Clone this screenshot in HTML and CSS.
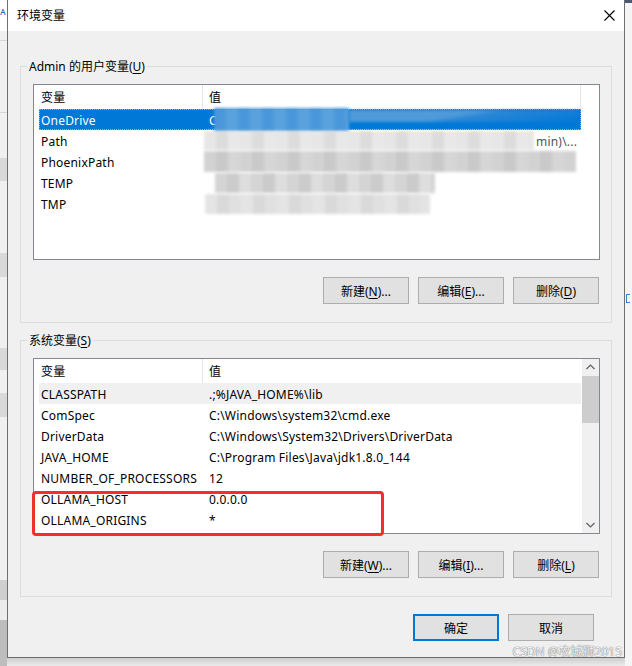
FILE: index.html
```html
<!DOCTYPE html>
<html lang="zh-CN">
<head>
<meta charset="utf-8">
<title>环境变量</title>
<link rel="stylesheet" href="styles.css">
</head>
<body>
<div class="screen">
  <div class="bg-left"><span class="bg-glyph">ᴀ</span></div>
  <div class="dialog-col">
    <div class="dialog">
      <div class="titlebar">
        <span class="title">环境变量</span>
        <svg class="close" width="11" height="11" viewBox="0 0 11 11"><path d="M0.5 0.5 L10.5 10.5 M10.5 0.5 L0.5 10.5" stroke="#000" stroke-width="1.1" fill="none"/></svg>
      </div>
      <div class="content">
        <div class="group">
          <div class="legend">Admin 的用户变量(<u>U</u>)</div>
          <div class="listbox">
            <div class="list">
              <div class="lhead"><div class="hcell1">变量</div><div class="hcell2">值</div></div>
              <div class="row selected"><div class="c1">OneDrive</div><div class="c2"><span>C</span><span class="mos blue1"></span><span class="mos blue2"></span></div></div>
              <div class="row"><div class="c1">Path</div><div class="c2"><span class="mos g-path"></span><span class="faint">min)\...</span></div></div>
              <div class="row"><div class="c1">PhoenixPath</div><div class="c2"><span class="mos g-phx"></span></div></div>
              <div class="row"><div class="c1">TEMP</div><div class="c2"><span class="mos g-temp"></span></div></div>
              <div class="row"><div class="c1">TMP</div><div class="c2"><span class="mos g-tmp"></span></div></div>
            </div>
          </div>
          <div class="btnrow">
            <button class="btn">新建(<u>N</u>)...</button>
            <button class="btn">编辑(<u>E</u>)...</button>
            <button class="btn">删除(<u>D</u>)</button>
          </div>
        </div>
        <div class="group g2">
          <div class="legend">系统变量(<u>S</u>)</div>
          <div class="listbox sys">
            <div class="list">
              <div class="lhead"><div class="hcell1">变量</div><div class="hcell2 narrow">值</div></div>
              <div class="row inactive"><div class="c1">CLASSPATH</div><div class="c2">.;%JAVA_HOME%\lib</div></div>
              <div class="row"><div class="c1">ComSpec</div><div class="c2">C:\Windows\system32\cmd.exe</div></div>
              <div class="row"><div class="c1">DriverData</div><div class="c2">C:\Windows\System32\Drivers\DriverData</div></div>
              <div class="row"><div class="c1">JAVA_HOME</div><div class="c2">C:\Program Files\Java\jdk1.8.0_144</div></div>
              <div class="row"><div class="c1">NUMBER_OF_PROCESSORS</div><div class="c2">12</div></div>
              <div class="row"><div class="c1">OLLAMA_HOST</div><div class="c2">0.0.0.0</div></div>
              <div class="row"><div class="c1">OLLAMA_ORIGINS</div><div class="c2">*</div></div>
            </div>
            <div class="vscroll">
              <div class="arrow"><svg width="17" height="17" viewBox="0 0 17 17"><path d="M4.5 10 L8.5 6 L12.5 10" stroke="#606060" stroke-width="1.2" fill="none"/></svg></div>
              <div class="thumb"></div>
              <div class="track"></div>
              <div class="arrow"><svg width="17" height="17" viewBox="0 0 17 17"><path d="M4.5 7 L8.5 11 L12.5 7" stroke="#606060" stroke-width="1.2" fill="none"/></svg></div>
            </div>
            <div class="highlight"></div>
          </div>
          <div class="btnrow">
            <button class="btn">新建(<u>W</u>)...</button>
            <button class="btn">编辑(<u>I</u>)...</button>
            <button class="btn">删除(<u>L</u>)</button>
          </div>
        </div>
        <div class="footer">
          <button class="btn default">确定</button>
          <button class="btn">取消</button>
        </div>
      </div>
    </div>
    <div class="shadow"></div>
  </div>
  <div class="bg-right"><span class="bg-mark"></span></div>
</div>
<div class="watermark">CSDN @攻城狮2015</div>
</body>
</html>
```
FILE: styles.css
```css
* { box-sizing: border-box; }
html, body { margin: 0; padding: 0; }
body {
  width: 632px;
  height: 666px;
  overflow: hidden;
  position: relative;
  background: #e8e8e8;
  font-family: "Noto Sans", "Noto Sans CJK SC", sans-serif;
  font-size: 12px;
  color: #000;
}
u { text-decoration: underline; text-underline-offset: 2px; }

.screen { display: flex; height: 666px; }

.bg-left {
  width: 7px;
  flex: none;
  position: relative;
  overflow: hidden;
  background: linear-gradient(to bottom,
    #ffffff 0 31px, #f0f0f0 31px 40px, #d5d5d5 40px 41px, #f0f0f0 41px 112px,
    #d5d5d5 112px 113px, #f0f0f0 113px 158px, #d9d9d9 158px 181px,
    #f0f0f0 181px 253px, #d9d9d9 253px 277px, #f0f0f0 277px 348px,
    #d9d9d9 348px 370px, #f0f0f0 370px 393px, #d9d9d9 393px 417px,
    #f0f0f0 417px 580px, #cfcfcf 580px 600px, #ececec 600px 620px,
    #bdbdbd 620px 666px);
}
.bg-glyph { position: absolute; left: 0; top: 5px; color: #2b6cc4; font-size: 11px; line-height: 12px; }

.bg-right {
  width: 7px;
  flex: none;
  position: relative;
  overflow: hidden;
  background: linear-gradient(to bottom, #4b5a70 0 3px, #f5f5f5 3px 100%);
}
.bg-mark {
  position: absolute;
  left: 1px;
  top: 294px;
  width: 4px;
  height: 9px;
  border: 1px solid #3b7fd0;
  border-right: none;
}

.dialog-col { width: 618px; flex: none; display: flex; flex-direction: column; }
.dialog {
  height: 658px;
  flex: none;
  border: 1px solid #6e6e6e;
  border-top: none;
  background: #f0f0f0;
  display: flex;
  flex-direction: column;
}
.shadow { flex: 1; background: linear-gradient(to bottom, #cdcdcd, #ececec); }

.titlebar {
  height: 31px;
  flex: none;
  background: #fff;
  display: flex;
  align-items: center;
  justify-content: space-between;
  padding: 0 9px 1px 9px;
}
.title { line-height: 16px; padding-top: 2px; }
.close { display: block; }

.content {
  flex: 1;
  padding: 35px 12px 0 12px;
  display: flex;
  flex-direction: column;
}

.group {
  border: 1px solid #dcdcdc;
  display: flex;
  flex-direction: column;
  padding: 0 11px 18px 12px;
}
.g2 { margin-top: 17px; }
.legend {
  align-self: flex-start;
  height: 16px;
  line-height: 15px;
  margin: -9px 0 0 -6px;
  padding: 1px 2px 0 2px;
  background: #f0f0f0;
}

.listbox {
  position: relative;
  height: 176px;
  margin-top: 10px;
  border: 1px solid #828790;
  background: #fff;
  display: flex;
  letter-spacing: 0.2px;
}
.list { flex: 1; display: flex; flex-direction: column; overflow: hidden; }
.lhead { height: 24px; flex: none; display: flex; }
.hcell1 {
  width: 169px;
  flex: none;
  border-right: 1px solid #e5e5e5;
  padding: 1px 0 0 7px;
  line-height: 23px;
}
.hcell2 {
  width: 378px;
  flex: none;
  border-right: 1px solid #e5e5e5;
  padding: 1px 0 0 6px;
  line-height: 23px;
}
.hcell2.narrow { border-right: none; }

.row {
  height: 21px;
  flex: none;
  width: 542px;
  margin-left: 5px;
  padding-top: 2px;
  display: flex;
  align-items: center;
  white-space: nowrap;
}
.c1 { width: 170px; flex: none; padding-left: 2px; }
.c2 { flex: 1; display: flex; align-items: center; }
.row.selected {
  background: #0078d7;
  color: #fff;
  outline: 1px dotted #f39c34;
  outline-offset: -1px;
}
.row.inactive { background: #f0f0f0; }

.mos { display: block; flex: none; filter: blur(1.5px); }
.blue1 {
  width: 135px;
  height: 24px;
  margin-left: -3px;
  margin-top: -2px;
  background: repeating-linear-gradient(90deg, #4a98db 0 12px, #5aa2de 12px 24px);
}
.blue2 {
  width: 230px;
  height: 12px;
  margin-top: -10px;
  background: linear-gradient(170deg, #4f9ad9 0 45%, #2a86d6 55%, #0078d7 100%);
}
.g-path {
  width: 330px;
  height: 19px;
  margin-left: -5px;
  margin-top: -2px;
  background: repeating-linear-gradient(90deg, #e6e6e6 0 12px, #dcdcdc 12px 24px, #e9e8e8 24px 36px);
}
.faint { color: #555; margin-left: 2px; }
.g-phx {
  width: 372px;
  height: 21px;
  margin-left: -5px;
  margin-top: -2px;
  background: repeating-linear-gradient(90deg, #d2d2d2 0 12px, #c9c9c9 12px 24px, #d6d6d6 24px 36px);
}
.g-temp {
  width: 220px;
  height: 20px;
  margin-left: 6px;
  margin-top: -2px;
  background: repeating-linear-gradient(90deg, #d4d4d4 0 12px, #cbcbcb 12px 24px, #dddddd 24px 36px);
}
.g-tmp {
  width: 225px;
  height: 20px;
  margin-left: -4px;
  margin-top: -2px;
  background: repeating-linear-gradient(90deg, #e4e4e4 0 12px, #d9d9d9 12px 24px, #e0e0e0 24px 36px);
}

.vscroll {
  width: 17px;
  flex: none;
  background: #f0f0f0;
  display: flex;
  flex-direction: column;
}
.arrow { height: 17px; flex: none; }
.arrow svg { display: block; }
.thumb { height: 47px; flex: none; background: #cdcdcd; }
.track { flex: 1; }

.highlight {
  position: absolute;
  left: -2px;
  top: 132px;
  width: 352px;
  height: 45px;
  border: 3px solid #f0302a;
  border-radius: 4px;
}

.btnrow {
  display: flex;
  justify-content: flex-end;
  gap: 9px;
  margin-top: 17px;
  padding-right: 1px;
}
.btn {
  width: 86px;
  height: 27px;
  padding: 1px 0 0 0;
  margin: 0;
  background: #e1e1e1;
  border: 1px solid #adadad;
  font-family: inherit;
  font-size: 12px;
  color: #000;
  display: flex;
  align-items: center;
  justify-content: center;
}
.btn.default { border: 2px solid #0078d7; }

.footer {
  display: flex;
  justify-content: flex-end;
  gap: 9px;
  margin-top: 17px;
  padding-right: 18px;
}

.watermark {
  position: absolute;
  right: 10px;
  top: 644px;
  font-size: 12px;
  line-height: 16px;
  color: #f4f4f4;
  text-shadow: 0 0 1px #7a7a7a, 0 0 1px #7a7a7a;
}
```
